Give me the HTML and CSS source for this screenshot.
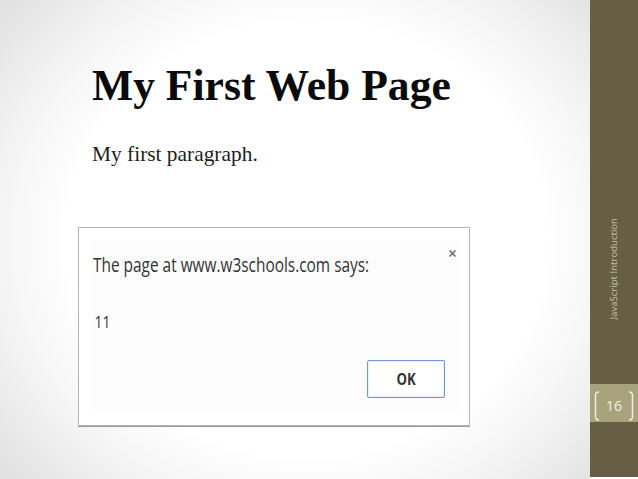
FILE: index.html
```html
<!DOCTYPE html>
<html>
<head>
<meta charset="utf-8">
<link rel="stylesheet" href="styles.css">
</head>
<body>
<main class="slide">
  <h1 class="title">My First Web Page</h1>
  <p class="para">My first paragraph.</p>
  <section class="dialog">
    <div class="panel">
      <div class="head">
        <span class="msg-title">The page at www.w3schools.com says:</span>
        <svg class="close" width="9" height="9" viewBox="0 0 9 9"><path d="M1.5 1.5 L7.5 7.5 M7.5 1.5 L1.5 7.5" stroke="#6f6f6f" stroke-width="1.6" fill="none"/></svg>
      </div>
      <div class="msg">11</div>
      <div class="actions">
        <button class="ok"><span class="ok-label">OK</span></button>
      </div>
    </div>
  </section>
</main>
<aside class="side">
  <div class="label-wrap"><span class="label">JavaScript Introduction</span></div>
  <div class="num">
    <svg class="br" width="6" height="30" viewBox="0 0 6 30"><path d="M5 1 Q1.5 1 1.5 4.5 V25.5 Q1.5 29 5 29" stroke="#f3efe0" stroke-width="1.5" fill="none"/></svg>
    <span class="num-text">16</span>
    <svg class="br" width="6" height="30" viewBox="0 0 6 30"><path d="M1 1 Q4.5 1 4.5 4.5 V25.5 Q4.5 29 1 29" stroke="#f3efe0" stroke-width="1.5" fill="none"/></svg>
  </div>
</aside>
</body>
</html>
```
FILE: styles.css
```css
html, body {
  margin: 0;
  padding: 0;
}
body {
  width: 638px;
  height: 479px;
  overflow: hidden;
  display: flex;
  background: #fff;
}
.slide {
  width: 590px;
  height: 479px;
  box-sizing: border-box;
  padding: 64px 0 0 78px;
  background: radial-gradient(ellipse 70% 78% at 52% 50%, #ffffff 58%, #f3f3f3 76%, #dedede 100%);
}
.title {
  margin: 0 0 0 14px;
  font: 700 43.6px/1 "Liberation Serif", "Times New Roman", serif;
  color: #0a0a0a;
}
.para {
  margin: 36px 0 0 14px;
  font: 400 21.4px/1 "Liberation Serif", "Times New Roman", serif;
  color: #1e1e1e;
}
.dialog {
  margin-top: 62px;
  width: 392px;
  box-sizing: border-box;
  padding: 12px 11px 15px 13px;
  background: #fff;
  border: 1px solid #b4b4b4;
  box-shadow: 0 1px 0 #9a9a9a;
}
.panel {
  height: 170px;
  box-sizing: border-box;
  padding: 15px 0 12px 1px;
  background: #fcfcfc;
  display: flex;
  flex-direction: column;
}
.head {
  display: flex;
  justify-content: space-between;
  align-items: flex-start;
  height: 19px;
}
.msg-title {
  display: inline-block;
  font: 400 19.5px/1 "Open Sans", sans-serif;
  color: #333;
  transform: scaleX(0.79);
  transform-origin: left center;
  white-space: nowrap;
}
.close {
  margin: -6px 1px 0 0;
}
.msg {
  margin-top: 39px;
  font: 400 17px/1 "Open Sans", sans-serif;
  color: #333;
  transform: scaleX(0.81);
  transform-origin: left center;
  padding-left: 2px;
}
.actions {
  margin-top: 30px;
  display: flex;
  justify-content: flex-end;
  padding-right: 13px;
}
.ok {
  width: 78px;
  height: 38px;
  box-sizing: border-box;
  border: 1px solid #6f98d6;
  border-radius: 2px;
  background: #fff;
  padding: 0;
  display: flex;
  align-items: center;
  justify-content: center;
  box-shadow: inset 0 0 0 1px #e6eefa;
}
.ok-label {
  display: inline-block;
  font: 700 16.5px/1 "Open Sans", sans-serif;
  color: #333;
  transform: scaleX(0.8);
}
.side {
  width: 48px;
  height: 477px;
  background: #675e46;
  display: flex;
  flex-direction: column;
  align-items: stretch;
}
.label-wrap {
  box-sizing: border-box;
  padding-top: 218px;
  display: flex;
  justify-content: center;
  height: 384px;
}
.label {
  writing-mode: vertical-rl;
  transform: rotate(180deg);
  font: 400 9.6px/1 "Open Sans", sans-serif;
  color: #c7c1aa;
  white-space: nowrap;
  height: max-content;
}
.num {
  height: 38px;
  box-sizing: border-box;
  background: #a8a27d;
  display: flex;
  align-items: center;
  justify-content: space-between;
  padding: 6px 4px 0 4px;
}
.num-text {
  font: 400 14px/1 "Open Sans", sans-serif;
  color: #f3efe0;
}
```
